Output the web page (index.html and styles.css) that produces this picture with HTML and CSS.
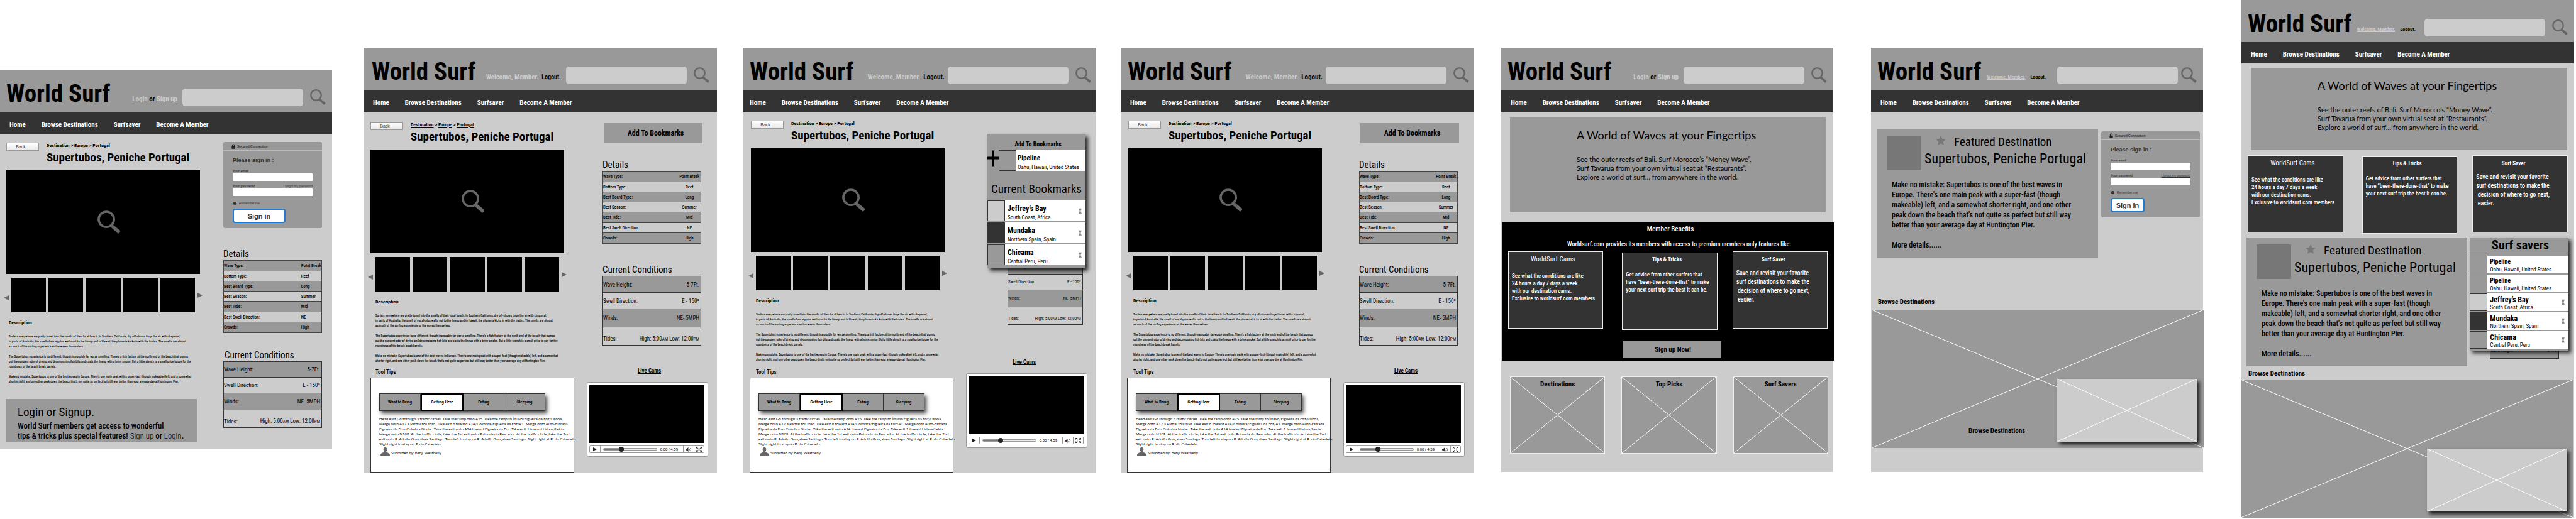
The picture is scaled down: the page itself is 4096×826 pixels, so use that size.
FILE: index.html
```html
<!DOCTYPE html>
<html lang="en">
<head>
<meta charset="utf-8">
<title>World Surf wireframes</title>
<link rel="stylesheet" href="styles.css">
</head>
<body>
<svg class="sprite" aria-hidden="true">
  <symbol id="i-search" viewBox="0 0 25 25"><ellipse cx="9.5" cy="9.5" rx="8.2" ry="8.2" fill="none" stroke="#666" stroke-width="2.4"/><path d="M13.6 17.2 L16.6 15.2 L24.4 21.6 Q24.6 24 22 24.8 Z" fill="#666"/></symbol>
  <symbol id="i-lock" viewBox="0 0 8 10"><path d="M2 5V3a2 2 0 0 1 4 0v2" fill="none" stroke="#222" stroke-width="1.4"/><rect x="0.5" y="4.5" width="7" height="5.5" rx="0.6" fill="#222"/></symbol>
  <symbol id="i-user" viewBox="0 0 15 13"><path d="M7.5 0C10 0 10.6 1.8 10.2 4C10 5.4 9.3 6 9.2 7C9.2 8.6 15 8 15 13H0C0 8 5.8 8.600 5.800 7C5.700 6 5 5.400 4.800 4C4.400 1.800 5 0 7.500 0Z" fill="#666"/></symbol>
  <symbol id="i-star" viewBox="0 0 16 15"><path d="M8 0l2.200 5.100 5.800.6-4.400 3.700 1.400 5.600L8 12.200 3 15l1.400-5.600L0 5.700l5.800-.6z" fill="#777"/></symbol>
  <symbol id="i-play" viewBox="0 0 6 6"><path d="M0 0L6 3L0 6Z" fill="#222"/></symbol>
  <symbol id="i-sound" viewBox="0 0 10 7"><path d="M0 2.200h1.800L4.500 0v7L1.800 4.800H0Z" fill="#333"/><path d="M5.800 2q1.200 1.500 0 3M7.600 1q2 2.500 0 5" fill="none" stroke="#333" stroke-width=".8"/></symbol>
  <symbol id="i-full" viewBox="0 0 9 8"><path d="M0 0h3L0 3ZM9 0v3L6 0ZM0 8V5l3 3ZM9 8H6l3-3Z" fill="#333"/><path d="M1 1l2.500 2M8 1L5.500 3M1 7l2.500-2M8 7L5.500 5" stroke="#333"/></symbol>
  <symbol id="i-left" viewBox="0 0 8 8"><path d="M8 0L0 4L8 8Z" fill="#666"/></symbol>
  <symbol id="i-right" viewBox="0 0 8 8"><path d="M0 0L8 4L0 8Z" fill="#666"/></symbol>
  <symbol id="i-plus" viewBox="0 0 18 25"><path d="M7 0h4v10h7v4h-7v11H7V14H0v-4h7Z" fill="#000"/></symbol>
  <symbol id="i-x" viewBox="0 0 5 10"><path d="M.8 .8L4.200 9.200M4.200 .8L.8 9.200" stroke="#888" stroke-width="1.500"/></symbol>
</svg>

<main class="board">

<section class="panel p1">
  <header class="head">
    <h1 class="logo">World Surf</h1>
    <div class="auth"><a href="#">Login</a> or <a href="#">Sign up</a></div>
    <input class="search" type="search" aria-label="Search">
    <svg class="glass"><use href="#i-search"/></svg>
  </header>
  <nav class="nav"><a href="#">Home</a><a href="#">Browse Destinations</a><a href="#">Surfsaver</a><a href="#">Become A Member</a></nav>
  <div class="cols">
    <div class="left">
      <div class="intro">
        <button class="back">Back</button>
        <div>
          <div class="crumbs"><a href="#">Destination</a> &gt; <a href="#">Europe</a> &gt; <a href="#">Portugal</a></div>
          <h2 class="spot">Supertubos, Peniche Portugal</h2>
        </div>
      </div>
      <div class="photo"><svg class="zoom"><use href="#i-search"/></svg></div>
      <div class="thumbs"><svg class="arrow"><use href="#i-left"/></svg><i></i><i></i><i></i><i></i><i></i><svg class="arrow next"><use href="#i-right"/></svg></div>
      <div class="desc">
        <h3>Description</h3>
        <p>Surfers everywhere are pretty tuned into the smells of their local beach. In Southern California, dry off-shores tinge the air with chaparral;<br>in parts of Australia, the smell of eucalyptus wafts out to the lineup and in Hawaii, the plumeria kicks in with the trades. The smells are almost<br>as much of the surfing experience as the waves themselves.</p>
        <p>The Supertubos experience is no different, though inarguably far worse smelling. There's a fish factory at the north end of the beach that pumps<br>out the pungent odor of drying and decomposing fish bits and coats the lineup with a briny smoke. But a little stench is a small price to pay for the<br>roundness of the beach break barrels.</p>
        <p>Make no mistake: Supertubos is one of the best waves in Europe. There's one main peak with a super-fast (though makeable) left, and a somewhat<br>shorter right, and one other peak down the beach that's not quite as perfect but still way better than your average day at Huntington Pier.</p>
      </div>
      <div class="cta">
        <h3>Login or Signup.</h3>
        <p>World Surf members get access to wonderful<br>tips &amp; tricks plus special features! <a href="#">Sign up</a> or <a href="#">Login</a>.</p>
      </div>
    </div>
    <div class="right">
      <form class="login">
        <div class="secured"><svg class="lock"><use href="#i-lock"/></svg>Secured Connection</div>
        <div class="fields">
          <h3>Please sign in :</h3>
          <label for="e1">Your email</label>
          <input class="field" id="e1" type="email">
          <div class="pair"><label for="w1">Your password</label><a href="#">I forgot my password</a></div>
          <input class="field" id="w1" type="password">
          <hr>
          <label class="remember"><input type="checkbox">Remember me</label>
          <button class="signin" type="button">Sign in</button>
        </div>
      </form>
      <h3 class="details-title">Details</h3>
      <table class="details">
        <tr><th scope="row">Wave Type:</th><td>Point Break</td></tr>
        <tr><th scope="row">Bottom Type:</th><td>Reef</td></tr>
        <tr><th scope="row">Best Board Type:</th><td>Long</td></tr>
        <tr><th scope="row">Best Season:</th><td>Summer</td></tr>
        <tr><th scope="row">Best Tide:</th><td>Mid</td></tr>
        <tr><th scope="row">Best Swell Direction:</th><td>NE</td></tr>
        <tr><th scope="row">Crowds:</th><td>High</td></tr>
      </table>
      <h3 class="cond-title">Current Conditions</h3>
      <table class="cond">
        <tr><th scope="row">Wave Height:</th><td>5-7Ft.</td></tr>
        <tr><th scope="row">Swell Direction:</th><td>E - 150º</td></tr>
        <tr><th scope="row">Winds:</th><td>NE- 5MPH</td></tr>
        <tr><th scope="row">Tides:</th><td>High: 5:00<small>AM</small> Low: 12:00<small>PM</small></td></tr>
      </table>
    </div>
  </div>
</section>

<section class="panel p2 member">
  <header class="head">
    <h1 class="logo">World Surf</h1>
    <div class="auth"><a href="#">Welcome,</a> <a href="#">Member.</a></div>
    <a class="logout lined" href="#">Logout.</a>
    <input class="search" type="search" aria-label="Search">
    <svg class="glass"><use href="#i-search"/></svg>
  </header>
  <nav class="nav"><a href="#">Home</a><a href="#">Browse Destinations</a><a href="#">Surfsaver</a><a href="#">Become A Member</a></nav>
  <div class="cols">
    <div class="left">
      <div class="view">
        <div class="intro">
          <button class="back">Back</button>
          <div>
            <div class="crumbs"><a href="#">Destination</a> &gt; <a href="#">Europe</a> &gt; <a href="#">Portugal</a></div>
            <h2 class="spot">Supertubos, Peniche Portugal</h2>
          </div>
        </div>
        <div class="photo"><svg class="zoom"><use href="#i-search"/></svg></div>
        <div class="thumbs"><svg class="arrow"><use href="#i-left"/></svg><i></i><i></i><i></i><i></i><i></i><svg class="arrow next"><use href="#i-right"/></svg></div>
        <div class="desc">
          <h3>Description</h3>
          <p>Surfers everywhere are pretty tuned into the smells of their local beach. In Southern California, dry off-shores tinge the air with chaparral;<br>in parts of Australia, the smell of eucalyptus wafts out to the lineup and in Hawaii, the plumeria kicks in with the trades. The smells are almost<br>as much of the surfing experience as the waves themselves.</p>
          <p>The Supertubos experience is no different, though inarguably far worse smelling. There's a fish factory at the north end of the beach that pumps<br>out the pungent odor of drying and decomposing fish bits and coats the lineup with a briny smoke. But a little stench is a small price to pay for the<br>roundness of the beach break barrels.</p>
          <p>Make no mistake: Supertubos is one of the best waves in Europe. There's one main peak with a super-fast (though makeable) left, and a somewhat<br>shorter right, and one other peak down the beach that's not quite as perfect but still way better than your average day at Huntington Pier.</p>
        </div>
        <h3 class="tips-title">Tool Tips</h3>
      </div>
      <div class="tips">
        <div class="tabs"><button>What to Bring</button><button class="on">Getting Here</button><button>Eating</button><button>Sleeping</button></div>
        <p>Head east Go through 3 traffic circles. Take the ramp onto A25. Take the ramp to Ílhavo/Figueira da Foz/Lisboa,<br>Merge onto A17 a Partial toll road. Take exit 8 toward A14/Coimbra/Figueira da Foz/A1. Merge onto Auto-Estrada<br>Figueira da Foz- Coimbra Norte . Take the exit onto A14 toward Figueira da Foz. Take exit 1 toward Lisboa/Leiria.<br>Merge onto N109 .At the traffic circle, take the 1st exit onto Rotunda do Pescador. At the traffic circle, take the 2nd<br>exit onto R. Adolfo Gonçalves Santiago. Turn left to stay on R. Adolfo Gonçalves Santiago. Slight right at R. do Cabedelo.<br>Slight right to stay on R. do Cabedelo.</p>
        <div class="by"><svg><use href="#i-user"/></svg>Submitted by: Benji Weatherly</div>
      </div>
    </div>
    <div class="right">
      <div class="facts">
        <button class="bookmark">Add To Bookmarks</button>
        <h3 class="details-title">Details</h3>
        <table class="details">
          <tr><th scope="row">Wave Type:</th><td>Point Break</td></tr>
          <tr><th scope="row">Bottom Type:</th><td>Reef</td></tr>
          <tr><th scope="row">Best Board Type:</th><td>Long</td></tr>
          <tr><th scope="row">Best Season:</th><td>Summer</td></tr>
          <tr><th scope="row">Best Tide:</th><td>Mid</td></tr>
          <tr><th scope="row">Best Swell Direction:</th><td>NE</td></tr>
          <tr><th scope="row">Crowds:</th><td>High</td></tr>
        </table>
        <h3 class="cond-title">Current Conditions</h3>
        <table class="cond">
          <tr><th scope="row">Wave Height:</th><td>5-7Ft.</td></tr>
          <tr><th scope="row">Swell Direction:</th><td>E - 150º</td></tr>
          <tr><th scope="row">Winds:</th><td>NE- 5MPH</td></tr>
          <tr><th scope="row">Tides:</th><td>High: 5:00<small>AM</small> Low: 12:00<small>PM</small></td></tr>
        </table>
      </div>
      <h3 class="live"><a href="#">Live Cams</a></h3>
      <div class="player">
        <div class="video"></div>
        <div class="controls"><button aria-label="Play"><svg class="play"><use href="#i-play"/></svg></button><span class="track"><input type="range" value="32" aria-label="Seek"><span>0:00 / 4:59</span></span><button aria-label="Volume"><svg class="snd"><use href="#i-sound"/></svg></button><button aria-label="Full screen"><svg class="full"><use href="#i-full"/></svg></button></div>
      </div>
    </div>
  </div>
</section>

<section class="panel p3 member">
  <header class="head">
    <h1 class="logo">World Surf</h1>
    <div class="auth"><a href="#">Welcome, Member.</a></div>
    <a class="logout" href="#">Logout.</a>
    <input class="search" type="search" aria-label="Search">
    <svg class="glass"><use href="#i-search"/></svg>
  </header>
  <nav class="nav"><a href="#">Home</a><a href="#">Browse Destinations</a><a href="#">Surfsaver</a><a href="#">Become A Member</a></nav>
  <div class="cols">
    <div class="left">
      <div class="view">
        <div class="intro">
          <button class="back">Back</button>
          <div>
            <div class="crumbs"><a href="#">Destination</a> &gt; <a href="#">Europe</a> &gt; <a href="#">Portugal</a></div>
            <h2 class="spot">Supertubos, Peniche Portugal</h2>
          </div>
        </div>
        <div class="photo"><svg class="zoom"><use href="#i-search"/></svg></div>
        <div class="thumbs"><svg class="arrow"><use href="#i-left"/></svg><i></i><i></i><i></i><i></i><i></i><svg class="arrow next"><use href="#i-right"/></svg></div>
        <div class="desc">
          <h3>Description</h3>
          <p>Surfers everywhere are pretty tuned into the smells of their local beach. In Southern California, dry off-shores tinge the air with chaparral;<br>in parts of Australia, the smell of eucalyptus wafts out to the lineup and in Hawaii, the plumeria kicks in with the trades. The smells are almost<br>as much of the surfing experience as the waves themselves.</p>
          <p>The Supertubos experience is no different, though inarguably far worse smelling. There's a fish factory at the north end of the beach that pumps<br>out the pungent odor of drying and decomposing fish bits and coats the lineup with a briny smoke. But a little stench is a small price to pay for the<br>roundness of the beach break barrels.</p>
          <p>Make no mistake: Supertubos is one of the best waves in Europe. There's one main peak with a super-fast (though makeable) left, and a somewhat<br>shorter right, and one other peak down the beach that's not quite as perfect but still way better than your average day at Huntington Pier.</p>
        </div>
        <h3 class="tips-title">Tool Tips</h3>
      </div>
      <div class="tips">
        <div class="tabs"><button>What to Bring</button><button class="on">Getting Here</button><button>Eating</button><button>Sleeping</button></div>
        <p>Head east Go through 3 traffic circles. Take the ramp onto A25. Take the ramp to Ílhavo/Figueira da Foz/Lisboa,<br>Merge onto A17 a Partial toll road. Take exit 8 toward A14/Coimbra/Figueira da Foz/A1. Merge onto Auto-Estrada<br>Figueira da Foz- Coimbra Norte . Take the exit onto A14 toward Figueira da Foz. Take exit 1 toward Lisboa/Leiria.<br>Merge onto N109 .At the traffic circle, take the 1st exit onto Rotunda do Pescador. At the traffic circle, take the 2nd<br>exit onto R. Adolfo Gonçalves Santiago. Turn left to stay on R. Adolfo Gonçalves Santiago. Slight right at R. do Cabedelo.<br>Slight right to stay on R. do Cabedelo.</p>
        <div class="by"><svg><use href="#i-user"/></svg>Submitted by: Benji Weatherly</div>
      </div>
    </div>
    <div class="right">
      <table class="cond">
        <tr><th scope="row">Wave Height:</th><td>5-7Ft.</td></tr>
        <tr><th scope="row">Swell Direction:</th><td>E - 150º</td></tr>
        <tr><th scope="row">Winds:</th><td>NE- 5MPH</td></tr>
        <tr><th scope="row">Tides:</th><td>High: 5:00<small>AM</small> Low: 12:00<small>PM</small></td></tr>
      </table>
      <h3 class="live"><a href="#">Live Cams</a></h3>
      <div class="player">
        <div class="video"></div>
        <div class="controls"><button aria-label="Play"><svg class="play"><use href="#i-play"/></svg></button><span class="track"><input type="range" value="32" aria-label="Seek"><span>0:00 / 4:59</span></span><button aria-label="Volume"><svg class="snd"><use href="#i-sound"/></svg></button><button aria-label="Full screen"><svg class="full"><use href="#i-full"/></svg></button></div>
      </div>
      <aside class="popup">
        <h3>Add To Bookmarks</h3>
        <div class="saver add"><svg class="plus"><use href="#i-plus"/></svg><i class="mid"></i><div><b>Pipeline</b><span>Oahu, Hawaii, United States</span></div></div>
        <h2>Current Bookmarks</h2>
        <div class="saver"><i class="light"></i><div><b>Jeffrey’s Bay</b><span>South Coast, Africa</span></div><button aria-label="Remove"><svg><use href="#i-x"/></svg></button></div>
        <div class="saver"><i class="dark"></i><div><b>Mundaka</b><span>Northern Spain, Spain</span></div><button aria-label="Remove"><svg><use href="#i-x"/></svg></button></div>
        <div class="saver"><i class="mid"></i><div><b>Chicama</b><span>Central Peru, Peru</span></div><button aria-label="Remove"><svg><use href="#i-x"/></svg></button></div>
      </aside>
    </div>
  </div>
</section>

<section class="panel p4 member">
  <header class="head">
    <h1 class="logo">World Surf</h1>
    <div class="auth"><a href="#">Welcome, Member.</a></div>
    <a class="logout" href="#">Logout.</a>
    <input class="search" type="search" aria-label="Search">
    <svg class="glass"><use href="#i-search"/></svg>
  </header>
  <nav class="nav"><a href="#">Home</a><a href="#">Browse Destinations</a><a href="#">Surfsaver</a><a href="#">Become A Member</a></nav>
  <div class="cols">
    <div class="left">
      <div class="view">
        <div class="intro">
          <button class="back">Back</button>
          <div>
            <div class="crumbs"><a href="#">Destination</a> &gt; <a href="#">Europe</a> &gt; <a href="#">Portugal</a></div>
            <h2 class="spot">Supertubos, Peniche Portugal</h2>
          </div>
        </div>
        <div class="photo"><svg class="zoom"><use href="#i-search"/></svg></div>
        <div class="thumbs"><svg class="arrow"><use href="#i-left"/></svg><i></i><i></i><i></i><i></i><i></i><svg class="arrow next"><use href="#i-right"/></svg></div>
        <div class="desc">
          <h3>Description</h3>
          <p>Surfers everywhere are pretty tuned into the smells of their local beach. In Southern California, dry off-shores tinge the air with chaparral;<br>in parts of Australia, the smell of eucalyptus wafts out to the lineup and in Hawaii, the plumeria kicks in with the trades. The smells are almost<br>as much of the surfing experience as the waves themselves.</p>
          <p>The Supertubos experience is no different, though inarguably far worse smelling. There's a fish factory at the north end of the beach that pumps<br>out the pungent odor of drying and decomposing fish bits and coats the lineup with a briny smoke. But a little stench is a small price to pay for the<br>roundness of the beach break barrels.</p>
          <p>Make no mistake: Supertubos is one of the best waves in Europe. There's one main peak with a super-fast (though makeable) left, and a somewhat<br>shorter right, and one other peak down the beach that's not quite as perfect but still way better than your average day at Huntington Pier.</p>
        </div>
        <h3 class="tips-title">Tool Tips</h3>
      </div>
      <div class="tips">
        <div class="tabs"><button>What to Bring</button><button class="on">Getting Here</button><button>Eating</button><button>Sleeping</button></div>
        <p>Head east Go through 3 traffic circles. Take the ramp onto A25. Take the ramp to Ílhavo/Figueira da Foz/Lisboa,<br>Merge onto A17 a Partial toll road. Take exit 8 toward A14/Coimbra/Figueira da Foz/A1. Merge onto Auto-Estrada<br>Figueira da Foz- Coimbra Norte . Take the exit onto A14 toward Figueira da Foz. Take exit 1 toward Lisboa/Leiria.<br>Merge onto N109 .At the traffic circle, take the 1st exit onto Rotunda do Pescador. At the traffic circle, take the 2nd<br>exit onto R. Adolfo Gonçalves Santiago. Turn left to stay on R. Adolfo Gonçalves Santiago. Slight right at R. do Cabedelo.<br>Slight right to stay on R. do Cabedelo.</p>
        <div class="by"><svg><use href="#i-user"/></svg>Submitted by: Benji Weatherly</div>
      </div>
    </div>
    <div class="right">
      <div class="facts">
        <button class="bookmark">Add To Bookmarks</button>
        <h3 class="details-title">Details</h3>
        <table class="details">
          <tr><th scope="row">Wave Type:</th><td>Point Break</td></tr>
          <tr><th scope="row">Bottom Type:</th><td>Reef</td></tr>
          <tr><th scope="row">Best Board Type:</th><td>Long</td></tr>
          <tr><th scope="row">Best Season:</th><td>Summer</td></tr>
          <tr><th scope="row">Best Tide:</th><td>Mid</td></tr>
          <tr><th scope="row">Best Swell Direction:</th><td>NE</td></tr>
          <tr><th scope="row">Crowds:</th><td>High</td></tr>
        </table>
        <h3 class="cond-title">Current Conditions</h3>
        <table class="cond">
          <tr><th scope="row">Wave Height:</th><td>5-7Ft.</td></tr>
          <tr><th scope="row">Swell Direction:</th><td>E - 150º</td></tr>
          <tr><th scope="row">Winds:</th><td>NE- 5MPH</td></tr>
          <tr><th scope="row">Tides:</th><td>High: 5:00<small>AM</small> Low: 12:00<small>PM</small></td></tr>
        </table>
      </div>
      <h3 class="live"><a href="#">Live Cams</a></h3>
      <div class="player">
        <div class="video"></div>
        <div class="controls"><button aria-label="Play"><svg class="play"><use href="#i-play"/></svg></button><span class="track"><input type="range" value="32" aria-label="Seek"><span>0:00 / 4:59</span></span><button aria-label="Volume"><svg class="snd"><use href="#i-sound"/></svg></button><button aria-label="Full screen"><svg class="full"><use href="#i-full"/></svg></button></div>
      </div>
    </div>
  </div>
</section>

<section class="panel p5">
  <header class="head">
    <h1 class="logo">World Surf</h1>
    <div class="auth"><a href="#">Login</a> or <a href="#">Sign up</a></div>
    <input class="search" type="search" aria-label="Search">
    <svg class="glass"><use href="#i-search"/></svg>
  </header>
  <nav class="nav"><a href="#">Home</a><a href="#">Browse Destinations</a><a href="#">Surfsaver</a><a href="#">Become A Member</a></nav>
  <div class="hero">
    <h2>A World of Waves at your Fingertips</h2>
    <p>See the outer reefs of Bali. Surf Morocco’s “Money Wave”.<br>Surf Tavarua from your own virtual seat at “Restaurants”.<br>Explore a world of surf… from anywhere in the world.</p>
  </div>
  <div class="benefits">
    <h3>Member Benefits</h3>
    <p class="lead">Worldsurf.com provides its members with access to premium members only features like:</p>
    <div class="cards">
      <article class="card cams"><h4>WorldSurf Cams</h4><p>See what the conditions are like<br>24 hours a day 7 days a week<br>with our destination cams.<br>Exclusive to worldsurf.com members</p></article>
      <article class="card tricks"><h4>Tips &amp; Tricks</h4><p>Get advice from other surfers that<br>have “been-there-done-that” to make<br>your next surf trip the best it can be.</p></article>
      <article class="card keep"><h4>Surf Saver</h4><p>Save and revisit your favorite<br>surf destinations to make the<br>&nbsp;decision of where to go next,<br>&nbsp;easier.</p></article>
    </div>
    <button class="join">Sign up Now!</button>
  </div>
  <div class="picks">
    <div class="ph"><svg viewBox="0 0 100 100" preserveAspectRatio="none"><path d="M0 0L100 100M100 0L0 100"/></svg><h4>Destinations</h4></div>
    <div class="ph"><svg viewBox="0 0 100 100" preserveAspectRatio="none"><path d="M0 0L100 100M100 0L0 100"/></svg><h4>Top Picks</h4></div>
    <div class="ph"><svg viewBox="0 0 100 100" preserveAspectRatio="none"><path d="M0 0L100 100M100 0L0 100"/></svg><h4>Surf Savers</h4></div>
  </div>
</section>

<section class="panel p6 compact">
  <header class="head">
    <h1 class="logo">World Surf</h1>
    <div class="auth"><a href="#">Welcome, Member.</a></div>
    <a class="logout" href="#">Logout.</a>
    <input class="search" type="search" aria-label="Search">
    <svg class="glass"><use href="#i-search"/></svg>
  </header>
  <nav class="nav"><a href="#">Home</a><a href="#">Browse Destinations</a><a href="#">Surfsaver</a><a href="#">Become A Member</a></nav>
  <div class="featured">
    <article class="feature">
      <div class="top">
        <i class="pic"></i>
        <div><div class="tag"><svg><use href="#i-star"/></svg><h3>Featured Destination</h3></div><h2>Supertubos, Peniche Portugal</h2></div>
      </div>
      <p>Make no mistake: Supertubos is one of the best waves in<br>Europe. There's one main peak with a super-fast (though<br>makeable) left, and a somewhat shorter right, and one other<br>peak down the beach that's not quite as perfect but still way<br>better than your average day at Huntington Pier.</p>
      <a href="#">More details......</a>
    </article>
    <form class="login">
      <div class="secured"><svg class="lock"><use href="#i-lock"/></svg>Secured Connection</div>
      <div class="fields">
        <h3>Please sign in :</h3>
        <label for="e2">Your email</label>
        <input class="field" id="e2" type="email">
        <div class="pair"><label for="w2">Your password</label><a href="#">I forgot my password</a></div>
        <input class="field" id="w2" type="password">
        <hr>
        <label class="remember"><input type="checkbox">Remember me</label>
        <button class="signin" type="button">Sign in</button>
      </div>
    </form>
  </div>
  <h3 class="browse">Browse Destinations</h3>
  <div class="map">
    <svg viewBox="0 0 100 100" preserveAspectRatio="none"><path d="M0 0L100 100M100 0L0 100"/></svg>
    <h4>Browse Destinations</h4>
    <div class="inset"><svg viewBox="0 0 100 100" preserveAspectRatio="none"><path d="M0 0L100 100M100 0L0 100"/></svg></div>
  </div>
</section>

<section class="panel p7 compact">
  <header class="head">
    <h1 class="logo">World Surf</h1>
    <div class="auth"><a href="#">Welcome, Member.</a></div>
    <a class="logout" href="#">Logout.</a>
    <input class="search" type="search" aria-label="Search">
    <svg class="glass"><use href="#i-search"/></svg>
  </header>
  <nav class="nav"><a href="#">Home</a><a href="#">Browse Destinations</a><a href="#">Surfsaver</a><a href="#">Become A Member</a></nav>
  <div class="hero">
    <h2>A World of Waves at your Fingertips</h2>
    <p>See the outer reefs of Bali. Surf Morocco’s “Money Wave”.<br>Surf Tavarua from your own virtual seat at “Restaurants”.<br>Explore a world of surf… from anywhere in the world.</p>
  </div>
  <div class="cards">
    <article class="card cams"><h4>WorldSurf Cams</h4><p>See what the conditions are like<br>24 hours a day 7 days a week<br>with our destination cams.<br>Exclusive to worldsurf.com members</p></article>
    <article class="card tricks"><h4>Tips &amp; Tricks</h4><p>Get advice from other surfers that<br>have “been-there-done-that” to make<br>your next surf trip the best it can be.</p></article>
    <article class="card keep"><h4>Surf Saver</h4><p>Save and revisit your favorite<br>surf destinations to make the<br>&nbsp;decision of where to go next,<br>&nbsp;easier.</p></article>
  </div>
  <div class="featured">
    <article class="feature">
      <div class="top">
        <i class="pic"></i>
        <div><div class="tag"><svg><use href="#i-star"/></svg><h3>Featured Destination</h3></div><h2>Supertubos, Peniche Portugal</h2></div>
      </div>
      <p>Make no mistake: Supertubos is one of the best waves in<br>Europe. There's one main peak with a super-fast (though<br>makeable) left, and a somewhat shorter right, and one other<br>peak down the beach that's not quite as perfect but still way<br>better than your average day at Huntington Pier.</p>
      <a href="#">More details......</a>
    </article>
    <div class="side">
      <aside class="savers">
        <h3>Surf savers</h3>
        <div class="saver small"><i class="mid"></i><div><b>Pipeline</b><span>Oahu, Hawaii, United States</span></div></div>
        <div class="saver small"><i class="mid"></i><div><b>Pipeline</b><span>Oahu, Hawaii, United States</span></div></div>
        <div class="saver"><i class="light"></i><div><b>Jeffrey’s Bay</b><span>South Coast, Africa</span></div><button aria-label="Remove"><svg><use href="#i-x"/></svg></button></div>
        <div class="saver"><i class="dark"></i><div><b>Mundaka</b><span>Northern Spain, Spain</span></div><button aria-label="Remove"><svg><use href="#i-x"/></svg></button></div>
        <div class="saver"><i class="mid"></i><div><b>Chicama</b><span>Central Peru, Peru</span></div><button aria-label="Remove"><svg><use href="#i-x"/></svg></button></div>
      </aside>
      <table class="cond"><tr><th scope="row">Wave Height:</th><td>5-7Ft.</td></tr></table>
    </div>
  </div>
  <h3 class="browse">Browse Destinations</h3>
  <div class="map">
    <svg viewBox="0 0 100 100" preserveAspectRatio="none"><path d="M0 0L100 100M100 0L0 100"/></svg>
    <div class="inset"><svg viewBox="0 0 100 100" preserveAspectRatio="none"><path d="M0 0L100 100M100 0L0 100"/></svg></div>
  </div>
</section>

</main>
</body>
</html>
```
FILE: styles.css
```css
* { box-sizing: border-box; margin: 0; padding: 0; }
body { background: #fff; color: #000; font-family: "Roboto Condensed", Roboto, sans-serif; }
h1, h2, h3, h4 { font-weight: 700; white-space: nowrap; }
p, a, th, td, button, label, span, b { white-space: nowrap; }
a { color: inherit; }
button { font: inherit; color: inherit; border: 0; background: none; }
i { display: block; font-style: normal; }
svg { display: block; }
.sprite { position: absolute; width: 0; height: 0; }

.board {
  display: grid;
  align-items: start;
  grid-template-columns:
    minmax(0, 528fr) 50fr minmax(0, 562fr) 41fr minmax(0, 562fr) 39fr minmax(0, 562fr)
    43fr minmax(0, 528fr) 60fr minmax(0, 528fr) 61fr minmax(0, 529fr) 3fr;
}
.panel { background: #ccc; grid-row: 1; margin-top: 76px; }
.p1 { grid-column: 1; margin-top: 111px; padding-bottom: 11px; }
.p2 { grid-column: 3; }
.p3 { grid-column: 5; }
.p4 { grid-column: 7; }
.p5 { grid-column: 9; padding-bottom: 29px; }
.p6 { grid-column: 11; padding-bottom: 38px; }
.p7 { grid-column: 13; margin-top: 0; }

/* header */
.head { display: flex; align-items: flex-start; background: #999; min-height: 68px; padding: 0 10px; }
.logo { font-size: 39px; line-height: 40px; margin-top: 18px; }
.auth { margin: 40px 8px 0 auto; font-size: 11px; line-height: 14px; font-weight: 700; white-space: nowrap; }
.auth a { color: #ccc; }
.logout { margin: 40px 8px 0 0; font-size: 10px; line-height: 14px; font-weight: 700; text-decoration: none; }
.logout.lined { text-decoration: underline; }
.search { width: 192px; height: 28px; margin-top: 30px; border: 0; border-radius: 5px; background: #ccc; }
.glass { width: 25px; height: 25px; margin: 31px 0 0 11px; }
.p2 .head { padding: 0 12px 0 13px; }
.member .auth { margin-right: 5px; }
.p3 .head, .p4 .head { padding: 0 8px 0 11px; }
.p3 .logout, .p4 .logout { margin-right: 5px; font-size: 11px; }
.compact .auth { font-size: 8px; }
.compact .logout { font-size: 8px; margin-right: 14px; }
.p6 .logout { margin-right: 18px; }
.p6 .glass { margin-left: 5px; }

.nav { display: flex; gap: 25px; background: #333; color: #fff; padding: 14px 15px 8px; font-size: 11px; line-height: 12px; font-weight: 700; }
.nav a { text-decoration: none; }
.p3 .nav { padding-left: 11px; }

/* destination page */
.cols { display: grid; grid-template-columns: minmax(0, 308fr) minmax(0, 157fr); gap: 37px; padding: 0 16px 0 10px; }
.member .cols { grid-template-columns: minmax(0, 324fr) minmax(0, 193fr); gap: 20px; padding: 0 14px 0 11px; }
.p4 .cols { padding: 0 15px 0 10px; }
.left { padding-top: 14px; }
.member .left { padding-top: 16px; }
.member .view { padding-right: 16px; }
.p3 .left, .p4 .left { padding-top: 14px; }
.p3 .view, .p4 .view { padding: 0 14px 0 2px; }
.intro { display: flex; gap: 12px; }
.back { width: 52px; height: 13px; padding-right: 6px; border: 1px solid #999; background: linear-gradient(#fff, #e8e8e8); color: #333; font: 7px/10px "Liberation Sans", sans-serif; }
.crumbs { margin-top: 1px; font-size: 8px; line-height: 8px; font-weight: 700; white-space: nowrap; }
.spot { margin-top: 5px; font-size: 19px; line-height: 20px; }
.photo { display: grid; place-items: center; margin-top: 10px; height: 165px; padding: 0 0 0 18px; background: #000; }
.zoom { width: 37px; height: 37px; }
.thumbs { display: flex; align-items: center; gap: 4px; margin: 6px -4px 0; }
.thumbs i { flex: 1; height: 55px; background: #000; }
.arrow { width: 8px; height: 8px; margin-top: 8px; }
.arrow.next { margin-top: 0; }
.desc { margin: 12px 0 0 4px; }
.member .desc, .tips-title { margin-left: 8px; }
.desc h3 { font-size: 8px; line-height: 10px; margin-bottom: 12px; }
.desc p { font-size: 5px; line-height: 8px; font-weight: 500; margin-bottom: 8px; }
.cta { margin: 24px 5px 0 0; padding: 11px 0 2px 18px; background: #999; }
.cta h3 { font-size: 19px; line-height: 20px; font-weight: 400; }
.cta p { margin-top: 4px; font-size: 13px; line-height: 16px; font-weight: 500; }
.cta a { font-weight: 300; text-decoration: none; }
.tips-title { font-size: 9px; line-height: 12px; font-weight: 500; margin-bottom: 3px; }
.p3 .tips-title, .p4 .tips-title { margin-top: 10px; margin-bottom: 3px; }
.tips { border: 1px solid #333; background: #fff; padding: 24px 6px 26px 13px; font: 6px/8px Lato, sans-serif; }
.tabs { display: flex; width: 264px; box-shadow: 3px 4px 6px rgba(0, 0, 0, .7); }
.tabs button { flex: 1; height: 28px; border: 1px solid #333; border-left-width: 0; background: #999; font: 700 7px/8px "Roboto Condensed", Roboto, sans-serif; }
.tabs button:first-child { border-left-width: 1px; }
.tabs .on { background: #fff; border: 2px solid #000; }
.tips p { margin-top: 9px; }
.by { display: flex; align-items: flex-end; gap: 2px; padding: 1px 0 0 2px; }
.by svg { width: 15px; height: 13px; }

/* facts */
.right { position: relative; padding-top: 13px; }
.member .right { padding-top: 18px; }
.facts { margin: 0 11px 0 25px; }
.bookmark { display: block; width: 100%; height: 32px; background: #999; font-size: 12px; font-weight: 700; padding-left: 8px; margin: 0 0 26px 2px; }
.details-title { font-size: 15px; line-height: 16px; font-weight: 400; margin-bottom: 2px; }
.cond-title { font-size: 15px; line-height: 18px; font-weight: 400; margin: 26px 0 1px 2px; }
.member .cond-title { margin: 32px 0 1px; }
table { width: 100%; border-collapse: collapse; }
th { text-align: left; font-weight: 500; }
.details { font-size: 7px; line-height: 8px; }
.details tr { height: 16px; border: 1px solid #444; }
.details tr:nth-child(odd), .cond tr:nth-child(odd) { background: #999; }
.details tr:nth-child(5), .details tr:nth-child(7), .details tr:first-child { height: 17px; }
.details td { text-align: center; width: 36px; font-weight: 500; }
.p1 .details td { text-align: left; width: 32px; }
.cond { font-size: 9px; line-height: 10px; }
.cond tr { height: 25px; border: 1px solid #333; }
.cond td { text-align: right; padding-right: 2px; font-weight: 400; }
.cond th { font-weight: 400; }
.cond small { font-size: 7px; }
.cond tr:nth-child(3) { height: 27px; }
.cond tr:nth-child(4) { height: 28px; }
.cond tr:nth-child(4) td, .cond tr:nth-child(4) th { padding-top: 8px; }
.p2 .cond tr, .p4 .cond tr { height: 26px; }
.p2 .cond tr:nth-child(n+3), .p4 .cond tr:nth-child(n+3) { height: 29px; }
.live { margin-top: 34px; font-size: 9px; line-height: 12px; text-align: center; padding-left: 6px; }
.p3 .cond { width: 110px; margin: 215px 0 0 66px; font-size: 7px; }
.p3 .cond small { font-size: 5px; }
.p3 .live { margin-top: 53px; padding: 0 8px 0 0; }
.player { margin-top: 12px; padding: 4px 5px 5px 3px; background: #fff; border: 1px solid #999; border-radius: 3px; }
.video { height: 92px; background: #000; }
.controls { display: flex; height: 12px; margin-top: 4px; border: 1px solid #999; border-radius: 2px; font: 6px/10px "Liberation Sans", sans-serif; }
.controls button { display: grid; place-items: center; width: 16px; }
.controls button + button { border-left: 1px solid #999; }
.track { flex: 1; display: flex; align-items: center; justify-content: space-between; padding: 0 8px 0 4px; border: solid #999; border-width: 0 1px; }
.track input { appearance: none; width: 86px; height: 4px; border: 1px solid #999; border-radius: 2px; background: linear-gradient(90deg, #777 32%, #eee 32%); }
.track input::-webkit-slider-thumb { appearance: none; width: 8px; height: 8px; border-radius: 50%; background: #222; }
.play { width: 6px; height: 6px; }
.snd { width: 10px; height: 7px; }
.full { width: 9px; height: 8px; }

/* sign-in card */
.login { background: #999; border-radius: 3px; padding-bottom: 8px; color: #333; font: 5px/6px "Liberation Sans", sans-serif; }
.secured { display: flex; align-items: center; gap: 3px; height: 14px; padding: 0 13px; border-bottom: 1px solid #bbb; font-weight: 700; }
.lock { width: 6px; height: 8px; }
.fields { padding: 9px 15px 0; }
.fields h3 { font-size: 9px; line-height: 12px; margin-bottom: 8px; }
.fields label { display: block; font-weight: 700; }
.field { display: block; width: 100%; height: 12px; margin: 1px 0 5px; border: 0; border-radius: 1px; background: #fff; }
.pair { display: flex; justify-content: space-between; }
.pair + .field { margin: 1px 0 4px; }
.fields hr { border: 0; border-top: 1px solid #222; }
.fields .remember { display: flex; gap: 4px; align-items: center; margin: 3px 0 6px 1px; font-weight: 400; }
.remember input { appearance: none; width: 5px; height: 5px; border-radius: 2px; background: #333; }
.signin { width: 84px; height: 23px; border: 2px solid #1c7cd5; border-radius: 4px; background: #fff; font-size: 11px; font-weight: 700; }
.p6 .signin { width: 54px; }
.p1 .login { margin-bottom: 33px; }

/* bookmarks */
.popup, .savers { background: #999; box-shadow: 4px 4px 6px rgba(0, 0, 0, .8); }
.popup { position: absolute; top: 35px; left: 34px; width: 156px; padding: 11px 0 3px; }
.popup h3 { font-size: 10px; line-height: 12px; text-align: center; margin-bottom: 3px; padding-left: 5px; }
.popup h2 { font-size: 19px; line-height: 20px; font-weight: 400; text-align: center; margin: 19px 0 8px; }
.saver { display: flex; min-height: 33px; margin-bottom: 2px; background: #fff; }
.saver i { width: 28px; border: 1px solid #333; background: #999; }
.saver .light { background: #ccc; }
.saver .dark { background: #333; }
.saver div { flex: 1; padding: 6px 0 0 4px; }
.saver b, .saver span { display: block; }
.saver b { font-size: 12px; line-height: 14px; }
.saver span { margin-top: 2px; font-size: 9px; line-height: 11px; }
.saver button { width: 24px; display: grid; place-items: center; padding-left: 6px; }
.saver button svg { width: 5px; height: 10px; }
.add div { padding-left: 2px; }
.add b { font-size: 11px; }
.plus { width: 18px; background: #999; height: 33px; padding-bottom: 7px; }
.savers { position: relative; z-index: 1; padding: 2px 0 1px; }
.savers h3 { font-size: 20px; line-height: 20px; text-align: center; padding-left: 4px; margin-bottom: 7px; }
.savers .saver { min-height: 28px; }
.savers .saver div { padding-top: 4px; }
.savers .saver b { font-size: 12px; line-height: 12px; }
.savers .small b { font-size: 10px; }
.savers .saver span { margin-top: 1px; line-height: 10px; }
.side .cond { width: 110px; margin: -13px 0 0 32px; font-size: 7px; }

/* landing */
.hero { background: #999; margin: 9px 12px 0 14px; padding: 17px 0 49px 106px; font-family: Lato, sans-serif; }
.hero h2 { font-size: 18px; line-height: 22px; font-weight: 400; }
.hero p { margin-top: 21px; font-size: 11px; line-height: 14px; }
.benefits { margin: 16px -1px 0 1px; padding: 5px 0 4px; background: #000; color: #fff; }
.benefits h3 { font-size: 11px; line-height: 12px; font-weight: 500; text-align: center; padding-left: 8px; }
.lead { margin: 12px 0 5px; padding-left: 36px; text-align: center; font-size: 10px; line-height: 12px; font-weight: 500; }
.cards { display: flex; align-items: flex-start; padding: 0 10px; color: #fff; }
.card { flex: 1; height: 123px; border: 1px solid #eee; background: #333; padding: 6px 0 0 5px; font-size: 9px; line-height: 12px; font-weight: 500; }
.card h4 { text-align: center; font-size: 9px; line-height: 12px; padding-right: 14px; }
.card.cams { margin-right: 30px; }
.cams h4 { font-size: 11px; font-weight: 400; margin-bottom: 14px; }
.card.tricks { margin: 2px 24px 0 0; padding-top: 4px; }
.tricks h4 { margin-bottom: 12px; }
.card.keep { font-size: 10px; line-height: 14px; }
.keep h4 { padding-right: 26px; margin-bottom: 9px; }
.join { display: block; width: 157px; height: 27px; margin: 18px 0 0 192px; background: #999; color: #000; font-size: 11px; font-weight: 700; padding-left: 3px; }
.picks { display: grid; grid-template-columns: repeat(3, minmax(0, 1fr)); gap: 26px; padding: 25px 8px 0 14px; }
.ph { position: relative; height: 123px; border: 1px solid #eee; background: #999; padding-top: 5px; text-align: center; font-size: 11px; line-height: 14px; }
.ph svg, .map svg { position: absolute; inset: 0; width: 100%; height: 100%; }
.ph path, .map path { stroke: #fff; stroke-width: 1px; vector-effect: non-scaling-stroke; }
.ph h4 { position: relative; }
.p7 .head { min-height: 67px; }
.p7 .hero { margin: 7px 11px 8px 15px; padding-bottom: 29px; }

.featured { display: grid; grid-template-columns: minmax(0, 352fr) minmax(0, 157fr); align-items: start; gap: 5px; padding: 27px 5px 0 9px; }
.p6 .login { margin-top: 4px; }
.p7 .featured { padding: 6px 9px 0 8px; gap: 4px; }
.feature { background: #999; padding: 11px 16px 12px; }
.top { display: flex; gap: 5px; }
.pic { width: 55px; height: 55px; background: #777; }
.tag { display: flex; gap: 13px; padding-left: 18px; }
.tag svg { width: 16px; height: 15px; }
.tag h3 { font-size: 19px; line-height: 20px; font-weight: 400; }
.top h2 { margin-top: 5px; font-size: 22px; line-height: 24px; font-weight: 400; }
.feature p { margin: 15px 0 16px 8px; font-size: 12px; line-height: 16px; font-weight: 500; }
.feature > a { margin-left: 8px; font-size: 12px; line-height: 16px; font-weight: 500; text-decoration: none; display: block; }
.browse { margin: 65px 0 6px 11px; font-size: 11px; line-height: 12px; }
.p7 .browse { margin: 6px 0 3px 11px; }
.map { position: relative; height: 220px; margin: 0 -1px 0 1px; background: #999; }
.p7 .map { margin: 0 1px 0 -1px; }
.map h4 { position: absolute; left: 154px; bottom: 21px; font-size: 11px; line-height: 12px; }
.inset { position: absolute; right: 11px; bottom: 10px; width: 222px; height: 100px; background: #ccc; box-shadow: 4px 4px 6px rgba(0, 0, 0, .85); }
```
